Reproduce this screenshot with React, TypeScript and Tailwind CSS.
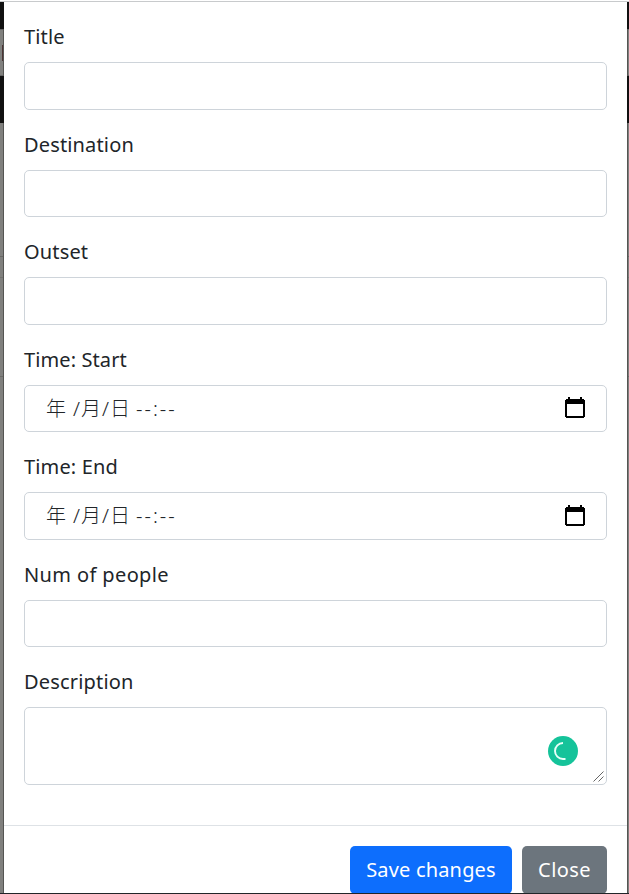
import type { ReactNode } from 'react';

function Field({ label, children, spacing = '' }: { label: string; children?: ReactNode; spacing?: string }) {
  return (
    <div className="mb-5">
      <label className="mb-2.5 block h-[30px] leading-[30px]">
        <span className={spacing}>{label}</span>
      </label>
      {children ?? <input className="block h-[47.5px] w-full rounded-[5px] border border-[#ced4da] bg-white px-4 outline-none" />}
    </div>
  );
}

function CalendarIcon() {
  return (
    <svg width="20" height="22" viewBox="0 0 20 22" className="-mt-[0.5px] block" shapeRendering="crispEdges">
      <path d="M3 0h2v2h10V0h2v2h2v1h1v17h-1v1H1v-1H0V3h1V2h2zM2 7v12h16V7z" fill="#000" fillRule="evenodd" />
    </svg>
  );
}

function DateTimeBox() {
  return (
    <div className="flex h-[47.5px] items-center justify-between rounded-[5px] border border-[#ced4da] pr-[21px] pl-[21px]">
      <div className="flex font-['Noto_Sans','Noto_Sans_CJK_TC',sans-serif] leading-[30px] font-light">
        <span className="w-[26px]">年</span>
        <span className="w-[9px] pl-px">/</span>
        <span className="w-[20px]">月</span>
        <span className="w-[9px] pl-px">/</span>
        <span className="w-[26px]">日</span>
        <span className="tracking-[2px]">--:--</span>
      </div>
      <CalendarIcon />
    </div>
  );
}

function Backdrop({ side }: { side: 'left' | 'right' }) {
  return (
    <div className={`flex shrink-0 flex-col border-[#555553] bg-[#80807e] ${side === 'left' ? 'w-1 border-r' : 'w-0.5 border-l'}`}>
      <div className={`h-[27px] bg-[#111] ${side === 'left' ? '-mr-px' : '-ml-px'}`} />
      <div className="h-[47px] border-y border-[#666]">
        {side === 'left' && <div className="mt-[15px] ml-auto h-4 w-px bg-[#4d3535]" />}
      </div>
      <div className={`h-[47px] bg-[#111] ${side === 'left' ? '-mr-px' : '-ml-px'}`} />
      <div className="h-[134px] border-b border-[#686866]" />
      <div className="h-[21px] border-b border-[#727270]" />
      <div className="h-[99px] border-b border-[#6b6b69]" />
    </div>
  );
}

export default function App() {
  return (
    <div className="flex h-[894px] w-[629px] flex-col overflow-hidden border-b border-[#212529] bg-white font-['Noto_Sans','Noto_Sans_CJK_TC',sans-serif] text-[20px] text-[#212529]">
      <div className="h-0.5 shrink-0 border-b border-[#c8cacc]" />
      <div className="flex min-h-0 flex-1">
        <Backdrop side="left" />
        <main className="min-w-0 flex-1">
          <form className="h-[823px] px-5 pt-[20.25px]">
            <Field label="Title" spacing="tracking-[0.15px]" />
            <Field label="Destination" spacing="tracking-[0.15px]" />
            <Field label="Outset" spacing="tracking-[0.15px]" />
            <Field label="Time: Start" spacing="tracking-[0.1px]"><DateTimeBox /></Field>
            <Field label="Time: End" spacing="tracking-[0.15px]"><DateTimeBox /></Field>
            <Field label="Num of people" spacing="tracking-[0.38px]" />
            <Field label="Description" spacing="tracking-[0.18px]">
              <div className="relative h-[77.75px] rounded-[5px] border border-[#ced4da]">
                <svg className="absolute top-[28px] right-[28px]" width="30" height="30" viewBox="0 0 30 30">
                  <circle cx="15" cy="15" r="15" fill="#15c39a" />
                  <path d="M15 7A8 8 0 0 0 15 23h2.5" fill="none" stroke="#e8fff8" strokeWidth="1.9" />
                </svg>
                <svg className="absolute right-[2px] bottom-[2px]" width="11" height="11" viewBox="0 0 11 11">
                  <path d="M.5 10.5l10-10M5.5 10.5l5-5" stroke="#666" strokeWidth="1" />
                </svg>
              </div>
            </Field>
          </form>
          <footer className="flex h-[68px] items-start justify-end gap-2.5 border-t border-[#dee2e6] px-5 pt-5 text-white">
            <button type="button" className="h-[47.5px] w-[162px] rounded-[5px] bg-[#0d6efd] tracking-[0.18px] whitespace-nowrap">Save changes</button>
            <button type="button" className="h-[47.5px] w-[85px] rounded-[5px] bg-[#6c757d] tracking-[0.4px] whitespace-nowrap">Close</button>
          </footer>
        </main>
        <Backdrop side="right" />
      </div>
    </div>
  );
}
